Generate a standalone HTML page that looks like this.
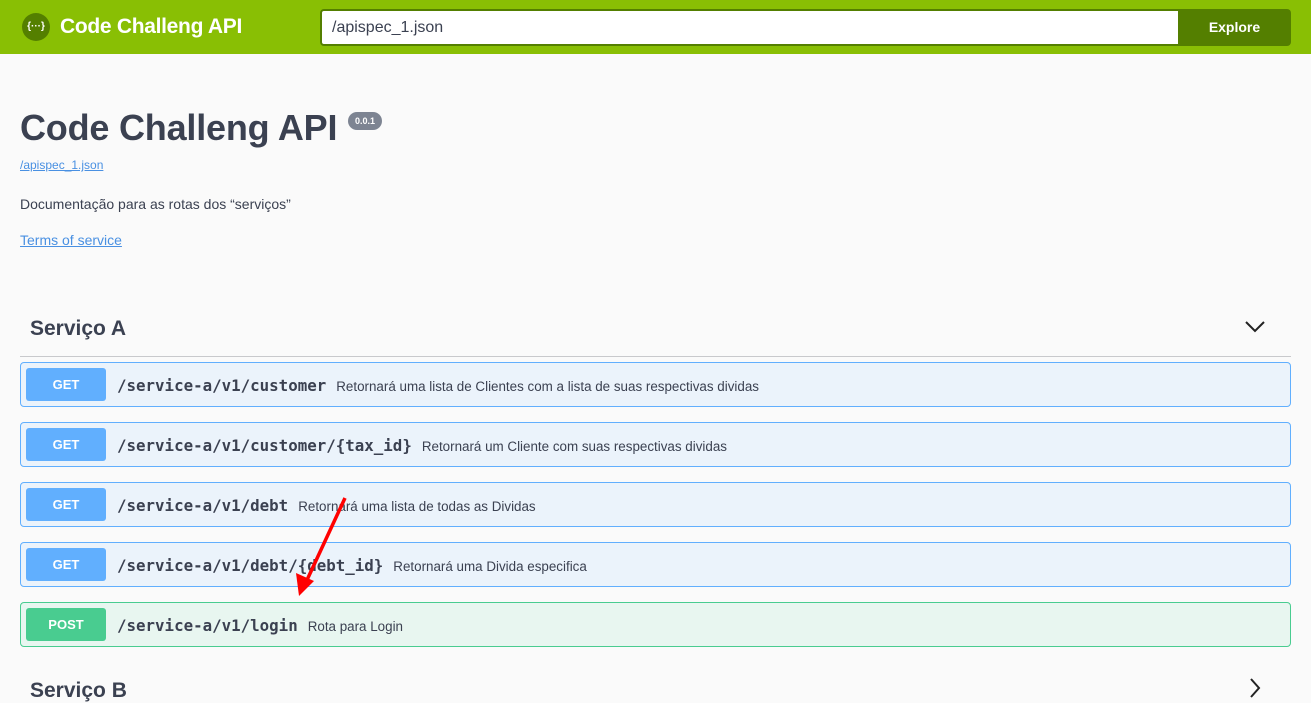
<!DOCTYPE html>
<html><head><meta charset="utf-8"><style>
*{margin:0;padding:0;box-sizing:border-box}
body{width:1311px;height:698px;overflow:hidden;background:#fafafa;font-family:"Liberation Sans",sans-serif;color:#3b4151;position:relative}
.top{position:absolute;left:0;top:0;width:1311px;height:54px;background:#89bf04}
.logo{position:absolute;left:22px;top:13px;width:28px;height:28px;border-radius:50%;background:#547f00;color:#fff;font-size:10px;font-weight:bold;text-align:center;line-height:28px}
.brand{position:absolute;left:60px;top:15px;color:#fff;font-weight:bold;font-size:21px;letter-spacing:-0.3px}
.inp{position:absolute;left:320px;top:9px;width:860px;height:37px;border:2px solid #547f00;border-radius:4px 0 0 4px;background:#fff;font-size:16px;line-height:33px;padding-left:10px;color:#3b4151}
.btn{position:absolute;left:1178px;top:9px;width:113px;height:37px;background:#547f00;color:#fff;font-weight:bold;font-size:14px;text-align:center;line-height:37px;border-radius:0 4px 4px 0}
.h1{position:absolute;left:20px;top:107px;font-size:36px;font-weight:bold;color:#3b4151;letter-spacing:-0.2px}
.badge{position:absolute;left:348px;top:112px;width:34px;height:18px;border-radius:9px;background:#7d8492;color:#fff;font-size:9px;font-weight:bold;text-align:center;line-height:18px}
a{color:#4990e2;text-decoration:underline}
.url{position:absolute;left:20px;top:158px;font-size:12px}
.desc{position:absolute;left:20px;top:196px;font-size:14px}
.tos{position:absolute;left:20px;top:232px;font-size:14px}
.tag{position:absolute;left:30px;font-size:21px;font-weight:bold}
.line{position:absolute;left:20px;top:356px;width:1271px;height:1px;background:#c8c9cc}
.op{position:absolute;left:20px;width:1271px;height:45px;border:1px solid #61affe;background:#ebf3fb;border-radius:4px}
.op.post{border-color:#49cc90;background:#e8f6f0}
.m{position:absolute;left:5px;top:5px;width:80px;height:33px;border-radius:3px;background:#61affe;color:#fff;font-weight:bold;font-size:13px;text-align:center;line-height:33px}
.post .m{background:#49cc90}
.p{position:absolute;left:96px;top:13px;font-family:"DejaVu Sans Mono","Liberation Mono",monospace;font-weight:bold;font-size:15.8px;color:#3b4151;white-space:nowrap}
.p span{font-family:"Liberation Sans",sans-serif;font-weight:normal;font-size:13.4px;margin-left:10px}
</style></head><body>
<div class="top"><div class="logo">{···}</div><div class="brand">Code Challeng API</div><div class="inp">/apispec_1.json</div><div class="btn">Explore</div></div>
<div class="h1">Code Challeng API</div><div class="badge">0.0.1</div>
<a class="url">/apispec_1.json</a>
<div class="desc">Documentação para as rotas dos “serviços”</div>
<a class="tos">Terms of service</a>
<div class="tag" style="top:317px">Serviço A</div>
<svg style="position:absolute;left:1245px;top:320px" width="20" height="14"><path d="M1 2 L10 11 L19 2" fill="none" stroke="#222" stroke-width="2"/></svg>
<div class="line"></div>
<div class="op" style="top:362px"><div class="m">GET</div><div class="p">/service-a/v1/customer<span>Retornará uma lista de Clientes com a lista de suas respectivas dividas</span></div></div>
<div class="op" style="top:422px"><div class="m">GET</div><div class="p">/service-a/v1/customer/{tax_id}<span>Retornará um Cliente com suas respectivas dividas</span></div></div>
<div class="op" style="top:482px"><div class="m">GET</div><div class="p">/service-a/v1/debt<span>Retornará uma lista de todas as Dividas</span></div></div>
<div class="op" style="top:542px"><div class="m">GET</div><div class="p">/service-a/v1/debt/{debt_id}<span>Retornará uma Divida especifica</span></div></div>
<div class="op post" style="top:602px"><div class="m">POST</div><div class="p">/service-a/v1/login<span>Rota para Login</span></div></div>
<div class="tag" style="top:679px">Serviço B</div>
<svg style="position:absolute;left:1248px;top:678px" width="14" height="20"><path d="M3 1 L11 10 L3 19" fill="none" stroke="#222" stroke-width="2"/></svg>
<svg style="position:absolute;left:0;top:0" width="1311" height="698"><line x1="345" y1="498" x2="307" y2="580" stroke="#f00" stroke-width="3.5"/><polygon points="299,596 296,573 314,581" fill="#f00"/></svg>
</body></html>
